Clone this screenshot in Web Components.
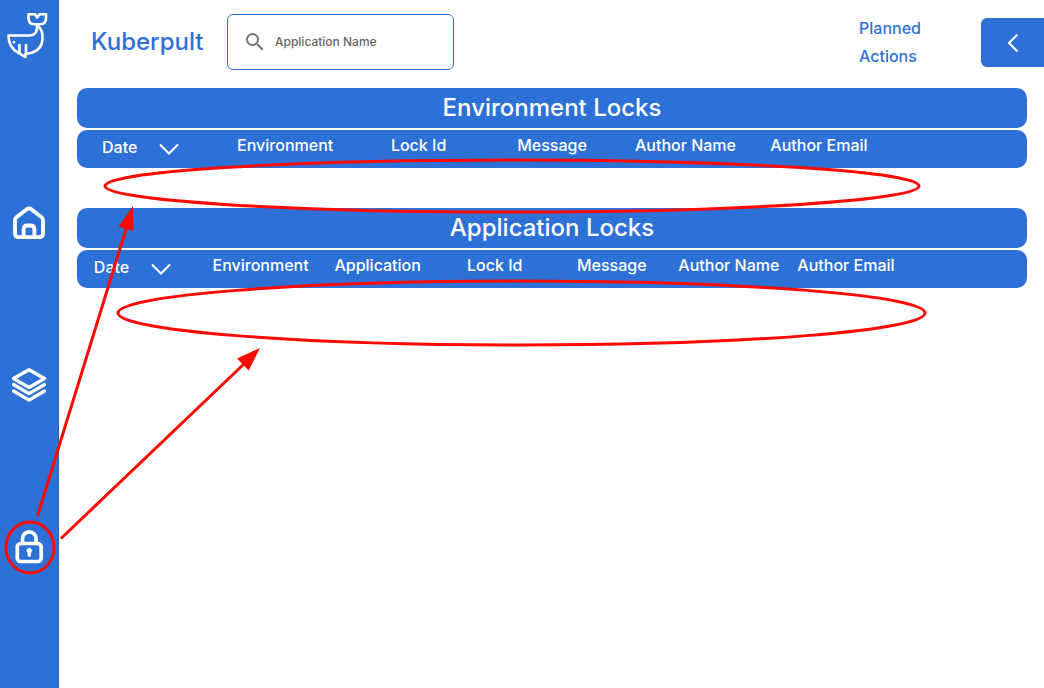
<!DOCTYPE html>
<html lang="en">
<head>
<meta charset="utf-8">
<meta name="viewport" content="width=device-width, initial-scale=1">
<title>Kuberpult</title>
<style>
  html, body { margin: 0; min-height: 100%; }
  body {
    --primary: #2d71d7;
    --on-primary: #fff;
    --mark: #ff0800;
    font: 500 16px/28px Inter, "Liberation Sans", sans-serif;
    color: var(--primary);
    background: #fff;
  }
</style>
</head>
<body>
<kp-app></kp-app>

<script>
const define = (name, html, setup) => {
  const template = document.createElement('template');
  template.innerHTML = html;
  customElements.define(name, class extends HTMLElement {
    constructor() {
      super();
      this.attachShadow({ mode: 'open' }).append(template.content.cloneNode(true));
    }
    connectedCallback() {
      if (setup && !this.ready) { this.ready = true; setup(this, this.shadowRoot); }
    }
  });
};

define('kp-nav-link', `
  <style>
    :host { display: block; }
    a { display: flex; justify-content: center; color: inherit; }
    ::slotted(svg) { display: block; width: 36px; height: 36px; }
  </style>
  <a href="#"><slot></slot></a>`,
  (host, root) => {
    const a = root.querySelector('a');
    a.href = host.getAttribute('href');
    a.setAttribute('aria-label', host.getAttribute('label'));
  });

define('kp-sidebar', `
  <style>
    :host { display: block; box-sizing: border-box; background: var(--primary); color: var(--on-primary); border-right: 1px solid #2562bd; }
    .logo { display: block; width: 44px; height: 48px; margin: 12px auto 145px 5px; }
    nav { display: grid; gap: 126px; }
    svg { fill: none; stroke: currentColor; stroke-linecap: round; stroke-linejoin: round; }
  </style>
  <svg class="logo" viewBox="0 0 44 48" stroke-width="2.6" role="img" aria-label="Kuberpult logo">
    <path d="M23.500 2.300H30l2.200 3.200 2.200-3.200H41v4q0 6-6 6h-5.500q-6 0-6-6z"/>
    <path d="M32 12.500v3.500q-.5 7.500-8 7.500H3.500q0 12 9.500 17l5 3.200 2.500 1.300V42q18-2 17-18-.5-6.500-4-9.500"/>
    <path d="M14.500 33v7.500M21 33v9M9 30v.2"/>
  </svg>
  <nav aria-label="Main">
    <kp-nav-link href="#home" label="Home">
      <svg viewBox="0 0 36 36" fill="none" stroke="currentColor" stroke-width="3.800" stroke-linejoin="round">
        <path d="M4 15q0-1.700 1.400-2.800L15.500 4.400q2.500-1.800 5 0l10.100 7.800q1.400 1.100 1.400 2.800V28.500q0 3.700-3.700 3.700H7.700q-3.700 0-3.700-3.700z"/>
        <path d="M12.600 32V24.500q0-4 4-4h2.800q4 0 4 4v7.500"/>
      </svg>
    </kp-nav-link>
    <kp-nav-link href="#environments" label="Environments">
      <svg viewBox="0 0 36 36" fill="none" stroke="currentColor" stroke-width="3.300" stroke-linecap="round" stroke-linejoin="round">
        <path d="M18 2.800 33.500 11.500 18 20.500 2.500 11.500z"/>
        <path d="M2.500 17.500 18 26.700l15.500-9.200M2.500 24 18 33.200 33.500 24"/>
      </svg>
    </kp-nav-link>
    <kp-nav-link href="#locks" label="Locks">
      <svg viewBox="0 0 36 36" fill="none" stroke="currentColor" stroke-width="3.700">
        <rect x="6.300" y="14.500" width="23.900" height="18" rx="3.500"/>
        <path d="M11.500 14.500V9.700a6.800 6.800 0 0 1 13.600 0v4.800"/>
        <path d="M18.300 19.200a2.500 2.500 0 0 1 1.600 4.400l-.6 3.800h-2l-.6-3.800a2.500 2.500 0 0 1 1.600-4.400z" fill="currentColor" stroke-width=".6"/>
      </svg>
    </kp-nav-link>
  </nav>`);

define('kp-search-field', `
  <style>
    :host { display: block; }
    label { display: flex; align-items: center; gap: 8px; box-sizing: border-box; height: 56px; padding: 0 15px; border: 1px solid var(--primary); border-radius: 6px; color: #666; }
    svg { flex: none; width: 24px; height: 24px; fill: #757575; }
    input { flex: 1; min-width: 0; padding: 0; border: 0; outline: 0; background: none; font: inherit; font-size: 12px; color: #444; }
    input::placeholder { color: #666; opacity: 1; }
  </style>
  <label>
    <svg viewBox="0 0 24 24" aria-hidden="true"><path d="M15.500 14h-.79l-.28-.27A6.470 6.470 0 0 0 16 9.500 6.500 6.500 0 1 0 9.500 16c1.610 0 3.090-.59 4.230-1.570l.27.28v.79l5 4.990L20.490 19zm-6 0a4.500 4.500 0 1 1 0-9 4.500 4.500 0 0 1 0 9z"/></svg>
    <input type="text" placeholder="Application Name" aria-label="Application Name">
  </label>`);

define('kp-header', `
  <style>
    :host { display: flex; align-items: flex-start; padding-left: 32px; }
    h1 { margin: 28px 0 0; width: 136px; font-size: 24px; line-height: 28px; font-weight: 500; }
    kp-search-field { width: 227px; margin-top: 14px; }
    .planned { width: 80px; margin: 14px 42px 0 auto; }
    button { display: grid; place-items: center; width: 63px; height: 49px; margin-top: 18px; padding: 0; border: 0; border-radius: 6px 0 0 6px; background: var(--primary); color: var(--on-primary); }
    svg { width: 24px; height: 24px; fill: none; stroke: currentColor; stroke-width: 2; }
  </style>
  <h1>Kuberpult</h1>
  <kp-search-field></kp-search-field>
  <div class="planned">Planned Actions</div>
  <button type="button" aria-label="Show planned actions">
    <svg viewBox="0 0 24 24"><path d="M16.500 3.500 8 12l8.500 8.500"/></svg>
  </button>`);

define('kp-lock-table', `
  <style>
    :host { display: grid; gap: 2px; color: var(--on-primary); }
    h2 { margin: 0; height: 40px; border-radius: 10px; background: var(--primary); text-align: center; font-size: 24px; line-height: 40px; font-weight: 500; }
    .bar { height: 38px; padding-left: 8px; border-radius: 10px; background: var(--primary); }
    table { width: var(--table-width, 85%); table-layout: fixed; border-collapse: collapse; }
    th { padding: 0; font-weight: 500; line-height: 30px; text-align: center; vertical-align: top; white-space: nowrap; }
    .sort { display: inline-flex; align-items: center; height: 34px; vertical-align: top; }
    button { display: grid; place-items: center; width: 64px; height: 34px; padding: 0; border: 0; background: none; color: inherit; }
    svg { width: 20px; height: 20px; margin-top: 4px; fill: none; stroke: currentColor; stroke-width: 2; }
  </style>
  <h2></h2>
  <div class="bar">
    <table>
      <thead><tr>
        <th scope="col"><span class="sort">Date<button type="button" aria-label="Sort by date"><svg viewBox="0 0 20 20"><path d="M1 5.500 10 14.500 19 5.500"/></svg></button></span></th>
      </tr></thead>
      <tbody></tbody>
    </table>
  </div>`,
  (host, root) => {
    const title = host.getAttribute('heading');
    root.querySelector('h2').textContent = title;
    root.querySelector('table').setAttribute('aria-label', title);
    for (const name of host.getAttribute('columns').split(',')) {
      const th = document.createElement('th');
      th.scope = 'col';
      th.textContent = name;
      root.querySelector('tr').append(th);
    }
  });

define('kp-annotations', `
  <style>
    :host { position: absolute; top: 0; left: 0; pointer-events: none; }
    svg { display: block; width: 1044px; height: 688px; fill: none; stroke: var(--mark); stroke-width: 3; }
    .head { fill: var(--mark); stroke: none; }
  </style>
  <svg viewBox="0 0 1044 688" aria-hidden="true">
    <ellipse cx="512" cy="186" rx="407" ry="26"/>
    <ellipse cx="521.500" cy="313" rx="403.500" ry="32"/>
    <ellipse cx="30" cy="547.500" rx="24" ry="25.500"/>
    <path d="M37.500 516 127 226M61 538.500 245 363"/>
    <path class="head" d="M133 206 133.500 231 118.500 226.500zM260 348 248.700 370.500 237 358.500z"/>
  </svg>`);

define('kp-app', `
  <style>
    :host { display: grid; grid-template-columns: 59px minmax(0, 1fr); min-height: 100vh; position: relative; }
    main { display: grid; align-content: start; gap: 40px; padding: 18px 17px 40px 18px; }
    .env { --table-width: 85%; }
    .app { --table-width: 87%; }
  </style>
  <kp-sidebar></kp-sidebar>
  <div>
    <kp-header></kp-header>
    <main>
      <kp-lock-table class="env" heading="Environment Locks" columns="Environment,Lock Id,Message,Author Name,Author Email"></kp-lock-table>
      <kp-lock-table class="app" heading="Application Locks" columns="Environment,Application,Lock Id,Message,Author Name,Author Email"></kp-lock-table>
    </main>
  </div>
  <kp-annotations></kp-annotations>`);
</script>
</body>
</html>
